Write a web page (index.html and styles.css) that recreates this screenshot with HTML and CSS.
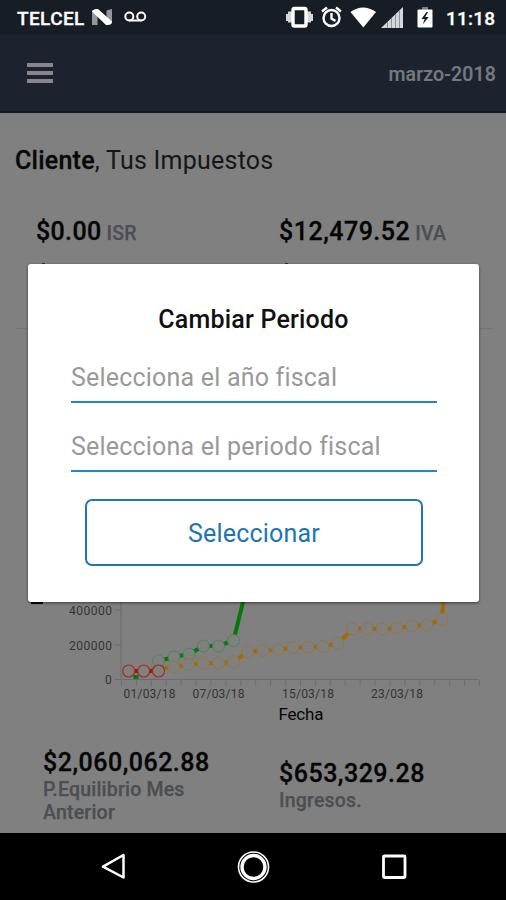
FILE: index.html
```html
<!DOCTYPE html>
<html lang="es">
<head>
<meta charset="utf-8">
<meta name="viewport" content="width=device-width">
<title>Tus Impuestos</title>
<link rel="stylesheet" href="styles.css">
</head>
<body>
<div class="screen">
  <div class="status">
    <span class="carrier">TELCEL</span>
    <svg class="status-left" width="60" height="34" viewBox="90 0 60 34">
      <path d="M92 10.500h5.500V25H92zM106.500 10.500l5.500-1.500v14.500l-5.500 1z" fill="#92989d"/>
      <path d="M92 11.500q1-2.500 4.500-2.500h1.500L112 21.500q-.5 3.500-4 3.500h-2z" fill="#fff"/>
      <g fill="none" stroke="#fff" stroke-width="2"><circle cx="129.300" cy="16.500" r="4"/><circle cx="141.200" cy="16.500" r="4"/><path d="M129 20.500h12.500"/></g>
    </svg>
    <svg class="status-right" width="154" height="34" viewBox="284 0 154 34">
      <path d="M286 14h2v7h-2zM288 11.500h4v11h-4zM307 11.500h4v11h-4zM311 14h2v7h-2z" fill="#d5d8da"/>
      <rect x="293" y="8.500" width="13" height="17.500" rx="1.500" fill="none" stroke="#fff" stroke-width="3.400"/>
      <circle cx="331.500" cy="18" r="8" fill="none" stroke="#fff" stroke-width="2.400"/>
      <path d="M322 11.500l5-4M341 11.500l-5-4M331.500 13v5.500l4 2.500" fill="none" stroke="#fff" stroke-width="2.400"/>
      <path d="M350.500 12q12.500-9 25.500 0L363.300 27.500z" fill="#fff"/>
      <path d="M381 28L403 7v21z" fill="#d4d7d9"/>
      <path d="M387.500 22v6M391.500 18v10M395.500 14v14M399.500 11v17" stroke="#777d84" stroke-width=".8"/>
      <path d="M422 7h6v3h-6z" fill="#777d84"/>
      <rect x="417.500" y="9.500" width="15" height="18" rx="1" fill="#fff"/>
      <path d="M426.500 12l-5 7h3.200l-2 5.500 6-7.500h-3.500l3-5z" fill="#171d25"/>
    </svg>
    <span class="clock">11:18</span>
  </div>
  <header class="header">
    <div class="menu"><i></i><i></i><i></i></div>
    <span class="period">marzo-2018</span>
  </header>
  <main class="content">
    <h1 class="title"><b>Cliente</b>, Tus Impuestos</h1>
    <div class="taxes">
      <div class="tax"><span class="amount isr">$0.00</span> <span class="label">ISR</span></div>
      <div class="tax"><span class="amount iva">$12,479.52</span> <span class="label">IVA</span></div>
    </div>
    <div class="marks"><i></i><i></i></div>
    <hr class="divider">
    <svg class="chart" width="506" height="130" viewBox="0 600 506 130">
      <path d="M31 600h12v4H31z" fill="#050505"/>
      <path d="M121 600v80M115 610h6M115 645h6M115 679.500h364" stroke="#6c6c6c" fill="none"/>
      <path d="M121.500 680v6M136.400 680v6M151.300 680v6M166.200 680v6M181.200 680v6M196.100 680v6M211 680v6M225.900 680v6M240.800 680v6M255.700 680v6M270.600 680v6M285.600 680v6M300.500 680v6M315.400 680v6M330.300 680v6M345.200 680v6M360.100 680v6M375 680v6M390 680v6M404.900 680v6M419.800 680v6M434.700 680v6M449.600 680v6M464.500 680v6M479.400 680v6" stroke="#707070" fill="none"/>
      <g class="axis-text">
        <text x="69" y="615" textLength="43">400000</text>
        <text x="69" y="649.500" textLength="43">200000</text>
        <text x="105" y="684">0</text>
        <text x="123.500" y="698" textLength="52">01/03/18</text>
        <text x="192.500" y="698" textLength="52">07/03/18</text>
        <text x="282" y="698" textLength="52">15/03/18</text>
        <text x="371" y="698" textLength="52">23/03/18</text>
      </g>
      <text class="axis-title" x="278.500" y="719.500" textLength="45">Fecha</text>
      <g fill="none" stroke-width="4">
        <path d="M158.500 661L174 657L189 654L203.500 646L218.500 646L233.500 640.500L243.500 600" stroke="#04780a"/>
        <path d="M151 669L158.500 669L173.500 667L188.500 664.500L203.500 663L218.500 663L233.500 662L247.500 652L263 650.500L278 650L293 647.500L308 647L323 646.500L338 643.500L352.500 629L367 628.500L382 629L397 628L412 626L427 625L442 619.500L443.500 600" stroke="#a06a06"/>
        <path d="M128.700 671h30" stroke="#b01206"/>
        <path d="M133.500 677h5" stroke="#04780a"/>
      </g>
      <g fill="#808080" stroke="#4c864f" stroke-width=".9">
        <circle cx="158.500" cy="661" r="6"/><circle cx="174" cy="657" r="6"/><circle cx="189" cy="654" r="6"/><circle cx="203.500" cy="646" r="6"/><circle cx="218.500" cy="646" r="6"/><circle cx="233.500" cy="640.500" r="6"/>
      </g>
      <g fill="#808080" stroke="#947443" stroke-width=".9">
        <circle cx="173.500" cy="667" r="6"/><circle cx="188.500" cy="664.500" r="6"/><circle cx="203.500" cy="663" r="6"/><circle cx="218.500" cy="663" r="6"/><circle cx="233.500" cy="662" r="6"/><circle cx="247.500" cy="652" r="6"/><circle cx="263" cy="650.500" r="6"/><circle cx="278" cy="650" r="6"/><circle cx="293" cy="647.500" r="6"/><circle cx="308" cy="647" r="6"/><circle cx="323" cy="646.500" r="6"/><circle cx="338" cy="643.500" r="6"/><circle cx="352.500" cy="629" r="6"/><circle cx="367" cy="628.500" r="6"/><circle cx="382" cy="629" r="6"/><circle cx="397" cy="628" r="6"/><circle cx="412" cy="626" r="6"/><circle cx="427" cy="625" r="6"/><circle cx="442" cy="619.500" r="6"/>
      </g>
      <g fill="#808080" stroke="#a02a22" stroke-width="1.100">
        <circle cx="128.700" cy="671" r="6"/><circle cx="143.700" cy="671" r="6"/><circle cx="158.500" cy="671" r="6"/>
      </g>
    </svg>
    <div class="totals">
      <div class="total"><div class="amount balance">$2,060,062.88</div><div class="label wide">P.Equilibrio Mes<br>Anterior</div></div>
      <div class="total income"><div class="amount">$653,329.28</div><div class="label wide">Ingresos.</div></div>
    </div>
  </main>
  <nav class="nav">
    <svg width="506" height="67" viewBox="0 833 506 67" fill="none" stroke="#fff">
      <path d="M123.500 855v22.500L103 866.700z" stroke-width="2.500" stroke-linejoin="round"/>
      <circle cx="253.500" cy="867" r="15" stroke-width="1.600"/><circle cx="253.500" cy="867" r="11.500" stroke-width="3.400"/>
      <rect x="383.500" y="856" width="21.500" height="21.500" rx="1" stroke-width="2.800"/>
    </svg>
  </nav>
  <section class="dialog">
    <h2>Cambiar Periodo</h2>
    <div class="field year"><span>Selecciona el año fiscal</span></div>
    <div class="field"><span>Selecciona el periodo fiscal</span></div>
    <button class="select">Seleccionar</button>
  </section>
</div>
</body>
</html>
```
FILE: styles.css
```css
* { box-sizing: border-box; }
body { margin: 0; font-family: Roboto, sans-serif; }
h1, h2 { margin: 0; font-weight: 400; }
svg { display: block; flex: none; }
.screen { position: relative; width: 506px; height: 900px; overflow: hidden; background: #808080; display: flex; flex-direction: column; }
.status { height: 34px; background: #171d25; color: #fff; display: flex; align-items: center; padding: 2px 10px 0 17px; white-space: nowrap; font-weight: 500; }
.status svg { margin-top: -2px; }
.carrier { width: 73px; font-size: 19px; letter-spacing: .4px; -webkit-text-stroke: .3px #fff; }
.status-right { margin-left: auto; }
.clock { width: 58px; padding-left: 8px; font-size: 19px; letter-spacing: .2px; -webkit-text-stroke: .3px #fff; }
.header { height: 79px; background: #1c232e; border-bottom: 2px solid #121722; display: flex; align-items: center; justify-content: space-between; padding: 0 10px 0 27px; }
.menu { display: grid; gap: 4px; }
.menu i { width: 26px; height: 4px; background: #85878a; }
.period { color: #747a80; font-size: 19.5px; font-weight: 500; letter-spacing: .15px; padding-top: 4px; -webkit-text-stroke: .2px #747a80; }
.content { height: 720px; overflow: hidden; white-space: nowrap; background: linear-gradient(#7d7e82, #808080 20px); }
.title { height: 95px; padding: 32px 0 0 15px; font-size: 25px; line-height: 32px; letter-spacing: .24px; color: #161616; }
.title b { font-weight: 500; color: #080808; -webkit-text-stroke: .3px #080808; }
.taxes { height: 54px; display: grid; grid-template-columns: 243px 1fr; padding: 8px 0 0 36px; }
.amount { font-size: 25px; line-height: 32px; font-weight: 500; letter-spacing: .5px; color: #050505; -webkit-text-stroke: .3px #050505; }
.isr { letter-spacing: .35px; }
.label { font-size: 19.5px; line-height: 23px; font-weight: 500; letter-spacing: .2px; color: #4b4e52; -webkit-text-stroke: .25px #4b4e52; }
.tax .label { margin-left: 1px; }
.marks { height: 66px; padding: 1px 0 0 42px; display: grid; grid-template-columns: 243px 1fr; }
.marks i { width: 3px; height: 2px; background: #333; }
.divider { width: 476px; height: 1px; margin: 0 0 0 17px; border: 0; background: #757575; }
.chart { margin-top: 271px; }
.axis-text { font-size: 12px; fill: #333; }
.axis-title { font-size: 17px; fill: #050505; }
.totals { display: grid; grid-template-columns: 236px 1fr; padding: 17px 0 0 43px; }
.income { padding-top: 11px; }
.total .label { margin-top: -1.5px; }
.nav { height: 67px; background: #000; }
.dialog { position: absolute; left: 28px; top: 264px; width: 451px; height: 338px; padding: 39px 43px 0; background: #fff; border-radius: 3px; box-shadow: 0 1px 3px rgba(0,0,0,.55); display: flex; flex-direction: column; white-space: nowrap; }
.dialog h2 { text-align: center; font-size: 25px; line-height: 34px; font-weight: 500; letter-spacing: .2px; color: #111; }
.field { width: 366px; height: 69px; padding-top: 28px; border-bottom: 2px solid #2685c6; color: #999; font-size: 25px; line-height: 32px; letter-spacing: .2px; }
.field.year { height: 66px; padding-top: 25px; }
.select { width: 338px; height: 67px; margin: 27px 0 0 14px; padding: 2px 0 0; background: #fff; border: 2px solid #1e77b8; border-radius: 7px; color: #1c75b5; font: 400 25px/32px Roboto, sans-serif; letter-spacing: .2px; }
```
